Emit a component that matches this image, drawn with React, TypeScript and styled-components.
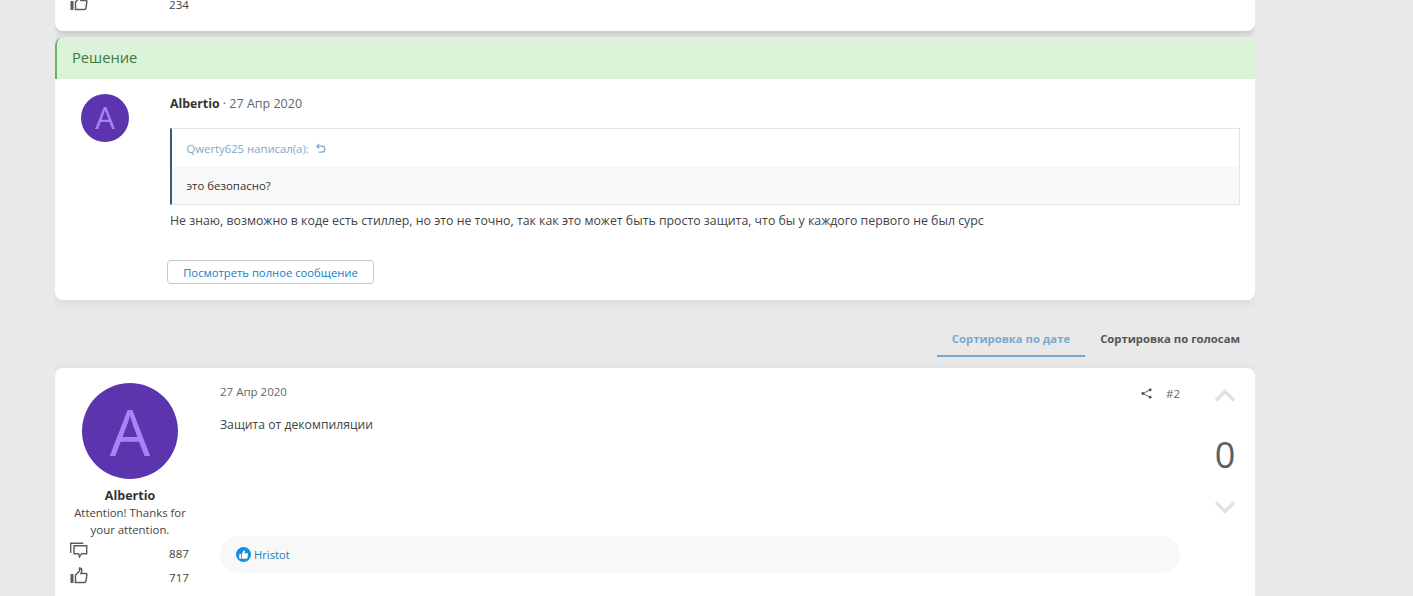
import React from "react";
import styled, { createGlobalStyle } from "styled-components";

const Global = createGlobalStyle`
  html, body { margin: 0; padding: 0; height: 596px; overflow: hidden; background: #e9e9e9; }
  body { font-family: "Open Sans", "Noto Sans", sans-serif; font-size: 12.33px; color: #3d3d3d; }
  * { box-sizing: border-box; }
`;
const Page = styled.div`
  width: 1200px;
  margin-left: 55px;
  height: 596px;
  overflow: hidden;
`;
const Card = styled.section`
  background: #fff;
  border-radius: 8px;
  box-shadow: 0 2px 14px rgba(0, 0, 0, 0.08);
`;
const TopCard = styled(Card)`
  height: 31px;
  border-radius: 0 0 8px 8px;
  padding: 0 0 0 15px;
  overflow: hidden;
  box-shadow: 0 3px 5px rgba(0, 0, 0, 0.14);
`;
const StatRow = styled.div<{ $offset?: number }>`
  display: flex;
  width: 119px;
  height: 24px;
  align-items: center;
  justify-content: space-between;
  color: #444;
  font-size: 11.6px;
  margin-top: ${(p) => p.$offset ?? 0}px;
`;
const SolutionCard = styled(Card)`
  margin-top: 6px;
  height: 263px;
  overflow: hidden;
`;
const SolutionHead = styled.div`
  height: 42px;
  background: #dcf2d9;
  border-left: 2px solid #63b55f;
  border-radius: 8px 8px 0 0;
  padding: 0 0 2px 15px;
  display: flex;
  align-items: center;
  font-size: 14.7px;
  color: #3e7a3b;
`;
const SolutionBody = styled.div`
  display: flex;
  padding: 15px 15px 0 26px;
`;
const SmallAvatar = styled.div`
  width: 48px;
  height: 48px;
  padding-bottom: 2px;
  border-radius: 50%;
  background: #5c35ae;
  color: #a983f5;
  font-size: 31px;
  display: flex;
  align-items: center;
  justify-content: center;
  flex: none;
`;
const SolutionMain = styled.div`
  margin-left: 41px;
  flex: 1;
  min-width: 0;
`;
const Meta = styled.div`
  height: 20px;
  line-height: 20px;
  color: #666;
  font-size: 12.5px;
`;
const Author = styled.b`
  color: #333;
  font-size: 12.3px;
`;
const Quote = styled.blockquote`
  margin: 14px 0 0;
  border: 1px solid #e3e3e3;
  border-left: 2px solid #3b5a70;
`;
const QuoteHead = styled.div`
  height: 38px;
  padding-left: 14.5px;
  display: flex;
  align-items: center;
  gap: 6px;
  font-size: 11.3px;
  color: #7ea7c9;
`;
const QuoteBody = styled.div`
  height: 37px;
  padding-left: 14.5px;
  background: #f8f8f8;
  display: flex;
  align-items: center;
  font-size: 11.4px;
  color: #333;
`;
const MessageText = styled.p`
  margin: 7px 0 0;
  line-height: 18px;
  color: #444;
`;
const FullButton = styled.button`
  display: block;
  margin: 30px 0 0 -3px;
  width: 207px;
  height: 24px;
  padding: 0;
  background: #fff;
  border: 1px solid #c8c8c8;
  border-radius: 4px;
  font: 11.25px "Open Sans", sans-serif;
  color: #0f80c4;
`;
const Tabs = styled.nav`
  margin-top: 20px;
  height: 37px;
  display: flex;
  justify-content: flex-end;
  border-bottom: 1px solid #e5e5e5;
`;
const Tab = styled.div<{ $active?: boolean }>`
  padding: 2px 15px 0;
  height: 37px;
  display: flex;
  align-items: center;
  font-size: 11.3px;
  font-weight: 700;
  color: ${(p) => (p.$active ? "#7aa9cf" : "#555")};
  border-bottom: 2px solid ${(p) => (p.$active ? "#7aa9cf" : "transparent")};
`;
const PostCard = styled(Card)`
  margin-top: 11px;
  height: 260px;
  border-radius: 8px 8px 0 0;
  display: flex;
`;
const UserCol = styled.div`
  width: 150px;
  flex: none;
  padding: 15px 15px 0;
  text-align: center;
`;
const BigAvatar = styled.div`
  width: 96px;
  height: 96px;
  margin: 0 auto;
  border-radius: 50%;
  background: #5c35ae;
  color: #a983f5;
  font-size: 64px;
  display: flex;
  align-items: center;
  justify-content: center;
`;
const UserName = styled.div`
  margin-top: 8px;
  line-height: 17px;
  font-weight: 700;
  font-size: 12.5px;
  color: #333;
`;
const UserTitle = styled.div`
  margin-bottom: 3px;
  line-height: 17px;
  color: #444;
  font-size: 11.4px;
`;
const PostMain = styled.div`
  width: 960px;
  margin-left: 15px;
  flex: none;
  padding-top: 15px;
  display: flex;
  flex-direction: column;
`;
const PostTop = styled.div`
  display: flex;
  justify-content: space-between;
  height: 17px;
  align-items: center;
  font-size: 11.5px;
  color: #666;
`;
const PostTools = styled.div`
  display: flex;
  align-items: center;
  gap: 14px;
  margin-top: 3px;
`;
const PostText = styled.div`
  margin-top: 16px;
  height: 120px;
  line-height: 18px;
  font-size: 12.2px;
  color: #444;
`;
const Reactions = styled.div`
  height: 37px;
  border-radius: 19px;
  background: #f8f8f8;
  display: flex;
  align-items: center;
  gap: 3px;
  padding-left: 16px;
  font-size: 11.2px;
  color: #1a82c4;
`;
const VoteCol = styled.div`
  width: 75px;
  flex: none;
  display: flex;
  flex-direction: column;
  align-items: center;
  padding: 21px 0 0 15px;
`;
const Score = styled.div`
  margin-top: 28px;
  height: 50px;
  line-height: 50px;
  font-size: 36px;
  color: #5a6066;
`;
const VoteGap = styled.div`
  height: 21px;
`;

const ThumbIcon = () => (
  <svg width="18" height="18" viewBox="0 1.5 18 18" overflow="visible" fill="none" stroke="#5c5c5c" strokeWidth="1.5">
    <rect x="0.5" y="7.5" width="3" height="9" fill="#5c5c5c" stroke="none" />
    <path d="M5.5 8.5 9.5 4.5V1.5c1.5 0 2.3 1.2 2.3 2.5 0 1-.4 2-.8 3h5c.6 0 1 .6.9 1.2l-1 6.5c-.1.7-.6 1.3-1.4 1.3H5.5z" />
  </svg>
);
const ChatIcon = () => (
  <svg width="18" height="18" viewBox="0 0 18 18" overflow="visible" fill="none" stroke="#5c5c5c" strokeWidth="1.4">
    <path d="M4 1.7h12.7v8h-5l-2.2 3.2-.9-3.2H4z" />
    <path d="M.7 9V-.7h12.6" />
  </svg>
);
const ReplyIcon = () => (
  <svg width="11" height="11" viewBox="0 0 12 12" fill="none" stroke="#7ea7c9" strokeWidth="1.3">
    <path d="M4.5 1 2 3.5 4.5 6" />
    <path d="M2 3.5h5.5a3 3 0 0 1 0 6.5H4" />
  </svg>
);
const ShareIcon = () => (
  <svg width="11" height="11" viewBox="0 0 12 12" fill="#555" stroke="#555" strokeWidth="1">
    <path d="M10 2 2 6l8 4" fill="none" />
    <circle cx="10" cy="2" r="1.2" />
    <circle cx="2" cy="6" r="1.2" />
    <circle cx="10" cy="10" r="1.2" />
  </svg>
);
const Chevron = ({ up }: { up?: boolean }) => (
  <svg width="22" height="13" viewBox="0 0 22 13" fill="none" stroke="#e1e1e1" strokeWidth="3.4">
    <path d={up ? "M2 11.5 11 2.5l9 9" : "M2 1.5l9 9 9-9"} />
  </svg>
);
const LikeBadge = () => (
  <svg width="15" height="15" viewBox="0 0 16 16">
    <circle cx="8" cy="8" r="8" fill="#0f8fe0" />
    <path d="M3.5 7.5h2v5h-2zM6.3 7.5 8.2 3.4c.9 0 1.4.7 1.2 1.6L9 6.6h3c.6 0 1 .5.9 1.1l-.7 3.8c-.1.6-.5 1-1.1 1H6.3z" fill="#fff" />
  </svg>
);

export default function App() {
  return (
    <Page>
      <Global />
      <TopCard>
        <StatRow $offset={-8}>
          <ThumbIcon />
          <span>234</span>
        </StatRow>
      </TopCard>
      <SolutionCard>
        <SolutionHead>Решение</SolutionHead>
        <SolutionBody>
          <SmallAvatar>A</SmallAvatar>
          <SolutionMain>
            <Meta>
              <Author>Albertio</Author> · 27 Апр 2020
            </Meta>
            <Quote>
              <QuoteHead>
                Qwerty625 написал(а):
                <ReplyIcon />
              </QuoteHead>
              <QuoteBody>это безопасно?</QuoteBody>
            </Quote>
            <MessageText>
              Не знаю, возможно в коде есть стиллер, но это не точно, так как это может быть просто защита, что бы у каждого первого не был сурс
            </MessageText>
            <FullButton>Посмотреть полное сообщение</FullButton>
          </SolutionMain>
        </SolutionBody>
      </SolutionCard>
      <Tabs>
        <Tab $active>Сортировка по дате</Tab>
        <Tab>Сортировка по голосам</Tab>
      </Tabs>
      <PostCard>
        <UserCol>
          <BigAvatar>A</BigAvatar>
          <UserName>Albertio</UserName>
          <UserTitle>
            Attention! Thanks for
            <br />
            your attention.
          </UserTitle>
          <StatRow>
            <ChatIcon />
            <span>887</span>
          </StatRow>
          <StatRow>
            <ThumbIcon />
            <span>717</span>
          </StatRow>
        </UserCol>
        <PostMain>
          <PostTop>
            <span>27 Апр 2020</span>
            <PostTools>
              <ShareIcon />
              <span>#2</span>
            </PostTools>
          </PostTop>
          <PostText>Защита от декомпиляции</PostText>
          <Reactions>
            <LikeBadge />
            Hristot
          </Reactions>
        </PostMain>
        <VoteCol>
          <Chevron up />
          <Score>0</Score>
          <VoteGap />
          <Chevron />
        </VoteCol>
      </PostCard>
    </Page>
  );
}
